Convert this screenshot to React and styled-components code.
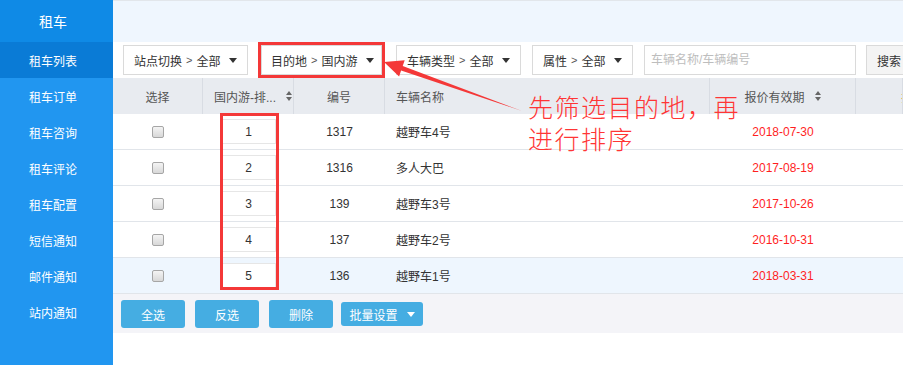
import React from "react";
import styled, { createGlobalStyle } from "styled-components";

const Global = createGlobalStyle`
  html, body { margin: 0; padding: 0; background: #fff; }
  body {
    font-family: "Liberation Sans", "Noto Sans CJK SC", sans-serif;
    font-size: 12px;
    color: #333;
  }
  * { box-sizing: border-box; }
`;

const Page = styled.div`
  display: flex;
  width: 903px;
  height: 365px;
  overflow: hidden;
`;

const Sidebar = styled.nav`
  width: 113px;
  flex: none;
  background: #2196f0;
  display: flex;
  flex-direction: column;
`;

const SideHeader = styled.div`
  height: 42px;
  background: #0f8ae6;
  color: #fff;
  font-size: 14px;
  display: flex;
  align-items: center;
  justify-content: center;
  padding-right: 7px;
`;

const SideItem = styled.div`
  height: 36px;
  display: flex;
  align-items: center;
  justify-content: center;
  padding-right: 7px;
  color: #fff;
  font-size: 12px;
  background: ${(p) => (p.$active ? "#0a7bd6" : "transparent")};
`;

const Main = styled.main`
  flex: 1;
  min-width: 0;
  position: relative;
  overflow: hidden;
  display: flex;
  flex-direction: column;
`;

const TopStrip = styled.div`
  height: 42px;
  flex: none;
  background: #eff6fe;
  border-top: 1px solid #e2e6eb;
`;

const FilterBar = styled.div`
  height: 36px;
  flex: none;
  display: flex;
  align-items: flex-start;
  padding: 3px 0 0 10px;
  white-space: nowrap;
`;

const FilterButton = styled.div`
  flex: none;
  width: ${(p) => p.$w}px;
  margin-left: ${(p) => p.$ml || 0}px;
  height: 30px;
  display: flex;
  align-items: center;
  padding: ${(p) => p.$pad || "0 10px"};
  background: #fff;
  border: 1px solid #dadada;
  color: #333;
  outline: ${(p) => (p.$marked ? "3px solid #f43838" : "none")};
  outline-offset: 0;
`;

const Sep = styled.span`
  margin: 0 4px;
  font-size: 11px;
  color: #555;
`;

const Caret = styled.span`
  margin-left: ${(p) => (p.$inline ? "0" : "auto")};
  flex: none;
  width: 0;
  height: 0;
  border-left: 4px solid transparent;
  border-right: 4px solid transparent;
  border-top: 5px solid ${(p) => p.$color || "#333"};
`;

const SearchInput = styled.input`
  flex: none;
  width: 212px;
  height: 30px;
  margin-left: 11px;
  padding: 0 6px;
  border: 1px solid #dadada;
  font: inherit;
  color: #333;
  &::placeholder { color: #bdbdbd; }
`;

const SearchButton = styled.button`
  flex: none;
  width: 60px;
  height: 30px;
  margin-left: 10px;
  padding: 0 0 0 10px;
  text-align: left;
  background: #f4f4f4;
  border: 1px solid #dadada;
  font: inherit;
  color: #333;
`;

const cols = "grid-template-columns: 90px 91px 91px 325px 146px 1fr;";

const HeadRow = styled.div`
  display: grid;
  ${cols}
  height: 36px;
  flex: none;
  background: #e8ebf0;
`;

const HeadCell = styled.div`
  display: flex;
  align-items: center;
  justify-content: ${(p) => p.$justify || "center"};
  gap: 10px;
  padding: ${(p) => p.$pad || "0"};
  border-right: 1px solid #d8dce3;
  color: ${(p) => p.$color || "#555"};
  white-space: nowrap;
  overflow: hidden;
`;

const SortIcon = styled.span`
  display: inline-flex;
  flex-direction: column;
  gap: 2px;
  flex: none;
  &::before, &::after {
    content: "";
    width: 0;
    height: 0;
    border-left: 3.5px solid transparent;
    border-right: 3.5px solid transparent;
  }
  &::before { border-bottom: 4px solid #666; }
  &::after { border-top: 4px solid #666; }
`;

const BodyRow = styled.div`
  display: grid;
  ${cols}
  height: 36px;
  flex: none;
  border-bottom: 1px solid #e1e5ea;
  background: ${(p) => (p.$hl ? "#eef6fe" : "#fff")};
`;

const Cell = styled.div`
  display: flex;
  align-items: center;
  justify-content: ${(p) => (p.$left ? "flex-start" : "center")};
  padding-left: ${(p) => (p.$left ? "11px" : "0")};
  color: ${(p) => p.$color || "#333"};
  white-space: nowrap;
`;

const Check = styled.span`
  width: 12px;
  height: 12px;
  border: 1px solid #a6a6a6;
  border-radius: 2px;
  background: linear-gradient(#f4f4f4, #d8d8d8);
`;

const OrderInput = styled.input`
  width: 54px;
  height: 25px;
  border: 1px solid #e6e6e6;
  background: #fff;
  text-align: center;
  font: inherit;
  color: #333;
  padding: 0;
`;

const ActionBar = styled.div`
  display: flex;
  align-items: center;
  padding: 6px 8px 5px;
  background: #f4f4f8;
  flex: none;
`;

const ActionButton = styled.button`
  height: ${(p) => (p.$small ? 24 : 28)}px;
  width: ${(p) => p.$w || 64}px;
  margin-left: ${(p) => p.$ml || 0}px;
  display: flex;
  align-items: center;
  justify-content: center;
  gap: 9px;
  background: #45ade2;
  border: none;
  border-radius: 3px;
  color: #fff;
  font: inherit;
  padding: 0;
`;

const ColumnMark = styled.div`
  position: absolute;
  left: 107px;
  top: 113px;
  width: 59px;
  height: 177px;
  border: 3px solid #f43838;
  pointer-events: none;
`;

const ArrowLayer = styled.svg`
  position: absolute;
  left: 0;
  top: 0;
  pointer-events: none;
`;

const Note = styled.div`
  position: absolute;
  left: 415px;
  top: 90px;
  font-family: "Noto Sans CJK SC", sans-serif;
  font-weight: 300;
  font-size: 25px;
  line-height: 32px;
  letter-spacing: 1.5px;
  color: #ff3535;
  white-space: nowrap;
  pointer-events: none;
`;

const rows = [
  { n: 1, id: 1317, name: "越野车4号", date: "2018-07-30" },
  { n: 2, id: 1316, name: "多人大巴", date: "2017-08-19" },
  { n: 3, id: 139, name: "越野车3号", date: "2017-10-26" },
  { n: 4, id: 137, name: "越野车2号", date: "2016-10-31" },
  { n: 5, id: 136, name: "越野车1号", date: "2018-03-31", hl: true },
];

const menu = ["租车订单", "租车咨询", "租车评论", "租车配置", "短信通知", "邮件通知", "站内通知"];

function arrowPoints() {
  const tip = [271, 62];
  const tail = [409, 111];
  const dx = tip[0] - tail[0];
  const dy = tip[1] - tail[1];
  const len = Math.hypot(dx, dy);
  const ux = dx / len, uy = dy / len;
  const nx = -uy, ny = ux;
  const bx = tip[0] - 19 * ux, by = tip[1] - 19 * uy;
  const p = (x, y) => `${x.toFixed(1)},${y.toFixed(1)}`;
  return [
    p(tail[0], tail[1]),
    p(bx + 2.4 * nx, by + 2.4 * ny),
    p(bx + 8.5 * nx, by + 8.5 * ny),
    p(tip[0], tip[1]),
    p(bx - 8.5 * nx, by - 8.5 * ny),
    p(bx - 2.4 * nx, by - 2.4 * ny),
  ].join(" ");
}

export default function App() {
  return (
    <>
      <Global />
      <Page>
        <Sidebar>
          <SideHeader>租车</SideHeader>
          <SideItem $active>租车列表</SideItem>
          {menu.map((m) => (
            <SideItem key={m}>{m}</SideItem>
          ))}
        </Sidebar>
        <Main>
          <TopStrip />
          <FilterBar>
            <FilterButton $w={125}>
              站点切换<Sep>&gt;</Sep>全部<Caret />
            </FilterButton>
            <FilterButton $w={121} $ml={13} $pad="0 7px 0 9px" $marked>
              目的地<Sep>&gt;</Sep>国内游<Caret />
            </FilterButton>
            <FilterButton $w={125} $ml={14}>
              车辆类型<Sep>&gt;</Sep>全部<Caret />
            </FilterButton>
            <FilterButton $w={101} $ml={11}>
              属性<Sep>&gt;</Sep>全部<Caret />
            </FilterButton>
            <SearchInput placeholder="车辆名称/车辆编号" />
            <SearchButton>搜索</SearchButton>
          </FilterBar>
          <HeadRow>
            <HeadCell>选择</HeadCell>
            <HeadCell $justify="space-between" $pad="0 2px 0 11px">
              国内游-排...<SortIcon />
            </HeadCell>
            <HeadCell>编号</HeadCell>
            <HeadCell $justify="flex-start" $pad="0 0 0 11px">车辆名称</HeadCell>
            <HeadCell>
              报价有效期<SortIcon />
            </HeadCell>
            <HeadCell $justify="flex-start" $pad="0 0 0 45px" $color="#e9a23b">排序</HeadCell>
          </HeadRow>
          {rows.map((r) => (
            <BodyRow key={r.n} $hl={r.hl}>
              <Cell><Check /></Cell>
              <Cell><OrderInput readOnly value={r.n} /></Cell>
              <Cell>{r.id}</Cell>
              <Cell $left>{r.name}</Cell>
              <Cell $color="#ff1f1f">{r.date}</Cell>
              <Cell />
            </BodyRow>
          ))}
          <ActionBar>
            <ActionButton>全选</ActionButton>
            <ActionButton $ml={10}>反选</ActionButton>
            <ActionButton $ml={10}>删除</ActionButton>
            <ActionButton $ml={8} $w={82} $small>
              批量设置<Caret $color="#fff" $inline />
            </ActionButton>
          </ActionBar>
          <ColumnMark />
          <ArrowLayer width="790" height="365" viewBox="0 0 790 365">
            <polygon points={arrowPoints()} fill="#f43838" />
          </ArrowLayer>
          <Note>
            先筛选目的地，再
            <br />
            进行排序
          </Note>
        </Main>
      </Page>
    </>
  );
}
